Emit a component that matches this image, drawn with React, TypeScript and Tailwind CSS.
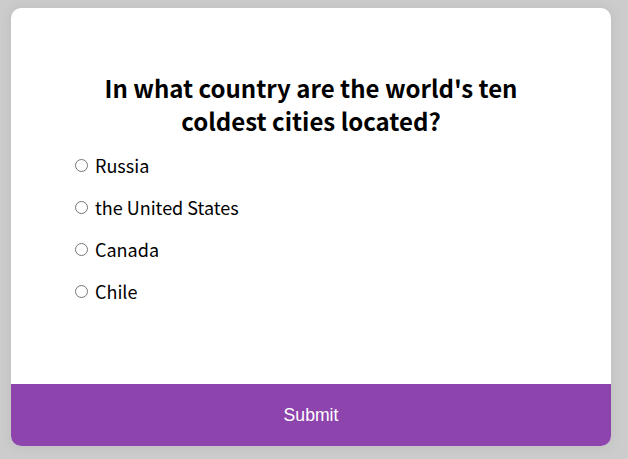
import { useState } from "react";

const answers = ["Russia", "the United States", "Canada", "Chile"];

export default function App() {
  const [picked, setPicked] = useState<string | null>(null);
  return (
    <div className="min-h-[459px] w-[628px] bg-[#cccccc] pt-2 pl-[11px]" style={{ fontFamily: '"Noto Sans CJK KR", "Noto Sans", sans-serif' }}>
      <div className="w-[600px] h-[438px] bg-white rounded-[10px] overflow-hidden flex flex-col shadow-[0_0_10px_2px_rgba(100,100,100,0.1)]">
        <div className="flex-1 px-16 pt-[63px]">
          <h2 className="text-center text-[24px] font-bold leading-[33px] text-black px-4">
            In what country are the world's ten coldest cities located?
          </h2>
          <ul className="mt-[15px] flex flex-col gap-4">
            {answers.map((a) => (
              <li key={a} className="flex items-center h-[26px] text-[18px] text-black">
                <input
                  type="radio"
                  name="answer"
                  checked={picked === a}
                  onChange={() => setPicked(a)}
                  className="w-[13px] h-[13px] mr-[7px] m-0"
                />
                <label>{a}</label>
              </li>
            ))}
          </ul>
        </div>
        <button className="w-full h-[62px] bg-[#8e44ad] text-white text-[17.6px]" style={{ fontFamily: '"Liberation Sans", Arial, sans-serif' }}>
          Submit
        </button>
      </div>
    </div>
  );
}
